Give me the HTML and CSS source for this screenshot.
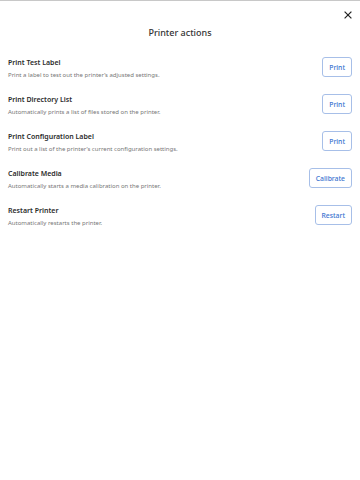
FILE: index.html
```html
<!DOCTYPE html>
<html>
<head>
<meta charset="utf-8">
<link rel="stylesheet" href="styles.css">
</head>
<body>
<div class="sheet">
  <div class="topbar">
    <button class="close" aria-label="Close">
      <svg width="8" height="8" viewBox="0 0 8 8"><path d="M0.6 0.6 L7.4 7.4 M7.4 0.6 L0.6 7.4" stroke="#222" stroke-width="1.2" fill="none"/></svg>
    </button>
  </div>
  <h1 class="title">Printer actions</h1>
  <ul class="actions">
    <li class="action">
      <div class="text">
        <div class="name">Print Test Label</div>
        <div class="desc">Print a label to test out the printer’s adjusted settings.</div>
      </div>
      <button class="btn">Print</button>
    </li>
    <li class="action">
      <div class="text">
        <div class="name">Print Directory List</div>
        <div class="desc">Automatically prints a list of files stored on the printer.</div>
      </div>
      <button class="btn">Print</button>
    </li>
    <li class="action">
      <div class="text">
        <div class="name">Print Configuration Label</div>
        <div class="desc">Print out a list of the printer’s current configuration settings.</div>
      </div>
      <button class="btn">Print</button>
    </li>
    <li class="action">
      <div class="text">
        <div class="name">Calibrate Media</div>
        <div class="desc">Automatically starts a media calibration on the printer.</div>
      </div>
      <button class="btn">Calibrate</button>
    </li>
    <li class="action">
      <div class="text">
        <div class="name">Restart Printer</div>
        <div class="desc">Automatically restarts the printer.</div>
      </div>
      <button class="btn">Restart</button>
    </li>
  </ul>
</div>
</body>
</html>
```
FILE: styles.css
```css
html, body {
  margin: 0;
  padding: 0;
  background: #fff;
}
body {
  font-family: "Noto Sans", "Open Sans", sans-serif;
  color: #222;
  width: 360px;
  height: 480px;
}
.sheet {
  border-top: 1px solid #c8c8c8;
}
.topbar {
  display: flex;
  justify-content: flex-end;
  padding: 8px 6px 0 0;
  height: 14px;
}
.close {
  border: 0;
  background: none;
  padding: 0;
  width: 12px;
  height: 12px;
  display: flex;
  align-items: center;
  justify-content: center;
}
.title {
  margin: 3px 0 0;
  text-align: center;
  font-size: 9px;
  font-weight: 500;
  color: #333;
  line-height: 14px;
}
.actions {
  list-style: none;
  margin: 0;
  padding: 17px 8px 0 8px;
  display: flex;
  flex-direction: column;
  gap: 13px;
}
.action {
  display: flex;
  align-items: flex-start;
  justify-content: space-between;
  height: 24px;
}
.name {
  font-size: 7px;
  font-weight: 600;
  color: #2b2b2b;
  line-height: 12px;
}
.desc {
  font-size: 6px;
  color: #777;
  line-height: 12px;
}
.btn {
  font-family: inherit;
  font-size: 6.8px;
  font-weight: 500;
  color: #3a73d0;
  background: #fff;
  border: 1px solid #a7bfe8;
  border-radius: 3px;
  height: 20px;
  padding: 0 6px;
}
```
